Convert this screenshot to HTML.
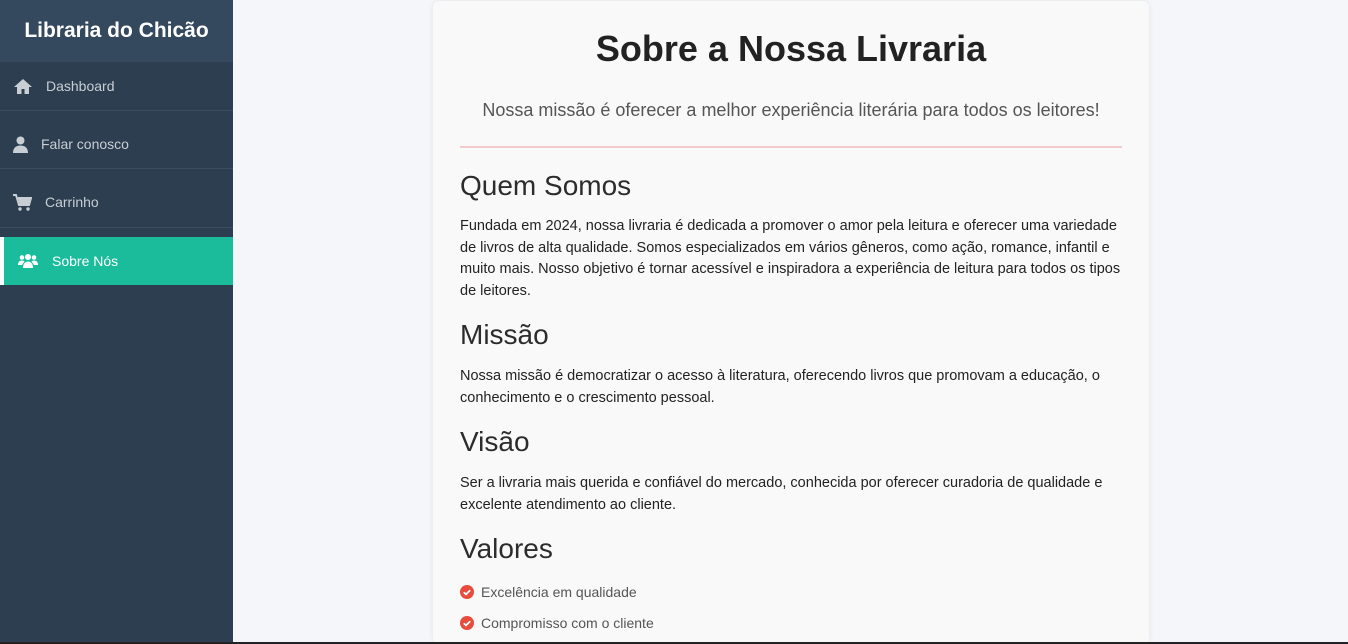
<!DOCTYPE html>
<html><head><meta charset="utf-8"><style>
*{box-sizing:border-box;margin:0;padding:0}
html,body{width:1348px;height:644px;overflow:hidden;background:#f4f6f9;font-family:"Liberation Sans",Arial,sans-serif;position:relative}
.sb{position:absolute;left:0;top:0;width:233px;height:644px;background:#2c3e50}
.sb h1{height:62px;background:#34495e;color:#fff;font-size:21px;font-weight:bold;text-align:center;line-height:62px}
.it{position:absolute;left:0;width:233px;height:20px;color:#c8ced4;font-size:14px;display:flex;align-items:center;padding-left:13px}
.it svg{margin-right:13px}
.ln{position:absolute;left:0;width:233px;height:1px;background:#3b4d5f}
.act{position:absolute;left:0;top:237px;width:233px;height:48px;background:#1abc9c;border-left:4px solid #fff;color:#fff;font-size:14px;display:flex;align-items:center;padding-left:14px}
.act svg{margin-right:14px}
.card{position:absolute;left:433px;top:1px;width:716px;height:643px;overflow:hidden;background:#f9f9f9;border-radius:6px;box-shadow:0 0 6px rgba(0,0,0,.08);padding:0 27px}
.t{font-size:36px;font-weight:bold;color:#222;text-align:center;margin-top:28px;line-height:40px}
.st{font-size:18px;color:#555;text-align:center;margin-top:30px;line-height:22px}
hr{border:0;border-top:2px solid #f3caca;margin:25px 0 0}
h2{font-size:28px;font-weight:normal;color:#2c2c2c;line-height:32px}
p{font-size:14.5px;line-height:21.5px;color:#222;width:662px}
li{list-style:none;font-size:14px;color:#555;display:flex;align-items:center;height:31px}
li svg{margin-right:7px}
.bot{position:absolute;left:0;top:642px;width:1348px;height:2px;background:#222}
</style></head><body>
<div class="sb">
<h1>Libraria do Chicão</h1>
<div class="it" style="top:76px"><svg width="20" height="17" viewBox="0 0 20 17"><path d="M10 1L1 9h3v7h4.5v-5h3v5H16V9h3z" fill="#c8ced4"/></svg>Dashboard</div>
<div class="ln" style="top:110px"></div>
<div class="it" style="top:134px"><svg width="15" height="17" viewBox="0 0 15 17"><circle cx="7.5" cy="4.5" r="4" fill="#c8ced4"/><path d="M0 17c0-5 3-7.5 7.5-7.5S15 12 15 17z" fill="#c8ced4"/></svg>Falar conosco</div>
<div class="ln" style="top:168px"></div>
<div class="it" style="top:192px"><svg width="19" height="17" viewBox="0 0 19 17"><path d="M0 1h3l3 10h10l2-7H5" fill="none" stroke="#c8ced4" stroke-width="2"/><path d="M5 4h13l-2 7H7z" fill="#c8ced4"/><circle cx="7" cy="15" r="1.7" fill="#c8ced4"/><circle cx="15" cy="15" r="1.7" fill="#c8ced4"/></svg>Carrinho</div>
<div class="ln" style="top:227px"></div>
</div>
<div class="act"><svg width="20" height="16" viewBox="0 0 20 16"><circle cx="10" cy="4" r="3" fill="#fff"/><circle cx="4" cy="4.5" r="2.3" fill="#fff"/><circle cx="16" cy="4.5" r="2.3" fill="#fff"/><path d="M5 15c0-4 2-6.5 5-6.5s5 2.5 5 6.5z" fill="#fff"/><path d="M0 12c0-3 1.5-4.5 4-4.5 1 0 2 .5 2.5 1L4 12z" fill="#fff"/><path d="M20 12c0-3-1.5-4.5-4-4.5-1 0-2 .5-2.5 1L16 12z" fill="#fff"/></svg>Sobre Nós</div>
<div class="card">
<div class="t">Sobre a Nossa Livraria</div>
<div class="st">Nossa missão é oferecer a melhor experiência literária para todos os leitores!</div>
<hr>
<h2 style="margin-top:22px">Quem Somos</h2>
<p style="margin-top:14px">Fundada em 2024, nossa livraria é dedicada a promover o amor pela leitura e oferecer uma variedade de livros de alta qualidade. Somos especializados em vários gêneros, como ação, romance, infantil e muito mais. Nosso objetivo é tornar acessível e inspiradora a experiência de leitura para todos os tipos de leitores.</p>
<h2 style="margin-top:17px">Missão</h2>
<p style="margin-top:15px">Nossa missão é democratizar o acesso à literatura, oferecendo livros que promovam a educação, o conhecimento e o crescimento pessoal.</p>
<h2 style="margin-top:17px">Visão</h2>
<p style="margin-top:15px">Ser a livraria mais querida e confiável do mercado, conhecida por oferecer curadoria de qualidade e excelente atendimento ao cliente.</p>
<h2 style="margin-top:17px">Valores</h2>
<ul style="margin-top:11px">
<li><svg width="14" height="14" viewBox="0 0 14 14"><circle cx="7" cy="7" r="7" fill="#e74c3c"/><path d="M3.8 7.2l2.2 2.2 4.2-4.2" fill="none" stroke="#fff" stroke-width="1.8"/></svg>Excelência em qualidade</li>
<li><svg width="14" height="14" viewBox="0 0 14 14"><circle cx="7" cy="7" r="7" fill="#e74c3c"/><path d="M3.8 7.2l2.2 2.2 4.2-4.2" fill="none" stroke="#fff" stroke-width="1.8"/></svg>Compromisso com o cliente</li>
</ul>
</div>
<div class="bot"></div>
</body></html>
